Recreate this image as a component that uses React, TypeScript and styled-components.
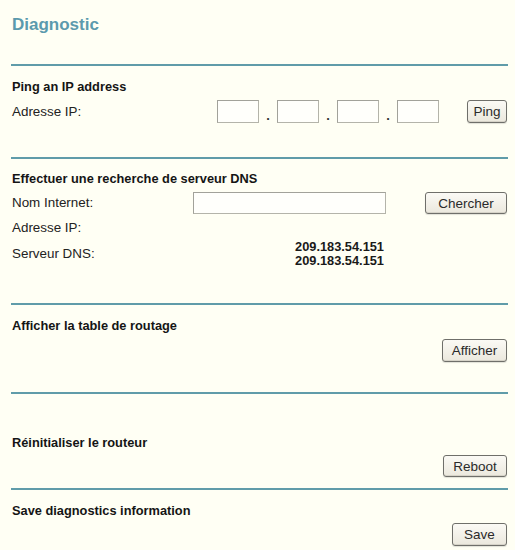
import styled, { createGlobalStyle } from "styled-components";

const GlobalStyle = createGlobalStyle`
  html, body {
    margin: 0;
    padding: 0;
    background: #fffff4;
  }
  body {
    font-family: "Liberation Sans", Arial, sans-serif;
    color: #1c1c1c;
  }
`;

export default function App() {
  return (
    <>
      <GlobalStyle />
      <div.page>
        <div.title>Diagnostic</div.title>
        <div.divider $mt={29} />

        <div.heading $mt={13}>Ping an IP address</div.heading>
        <div.pingRow>
          <div.label>Adresse IP:</div.label>
          <div.ipGroup>
            {[0, 1, 2, 3].map((i) => (
              <div.ipCell key={i}>
                <Field $w={42} $h={23} />
                {i < 3 && <div.dot>.</div.dot>}
              </div.ipCell>
            ))}
          </div.ipGroup>
          <Button $w={40} $h={23}>
            Ping
          </Button>
        </div.pingRow>
        <div.divider $mt={34} />

        <div.heading $mt={12}>Effectuer une recherche de serveur DNS</div.heading>
        <div.dnsRow $mt={5} $h={22}>
          <div.label>Nom Internet:</div.label>
          <Field $w={193} $h={22} />
          <Button $w={82} $h={22}>
            Chercher
          </Button>
        </div.dnsRow>
        <div.dnsRow $mt={4} $h={20}>
          <div.label>Adresse IP:</div.label>
        </div.dnsRow>
        <div.dnsRow $mt={2} $h={27}>
          <div.label>Serveur DNS:</div.label>
          <div.values>
            <span>209.183.54.151</span>
            <span>209.183.54.151</span>
          </div.values>
        </div.dnsRow>
        <div.divider $mt={36} />

        <div.heading $mt={13}>Afficher la table de routage</div.heading>
        <div.actionRow $mt={5}>
          <Button $w={65} $h={23}>
            Afficher
          </Button>
        </div.actionRow>
        <div.divider $mt={30} />

        <div.heading $mt={41}>Réinitialiser le routeur</div.heading>
        <div.actionRow $mt={4}>
          <Button $w={64} $h={22}>
            Reboot
          </Button>
        </div.actionRow>
        <div.divider $mt={11} />

        <div.heading $mt={13}>Save diagnostics information</div.heading>
        <div.actionRow $mt={4}>
          <Button $w={55} $h={23}>
            Save
          </Button>
        </div.actionRow>
      </div.page>
    </>
  );
}

const Field = styled.input.attrs({ type: "text" })<{ $w: number; $h: number }>`
  box-sizing: border-box;
  width: ${(p) => p.$w}px;
  height: ${(p) => p.$h}px;
  margin: 0;
  padding: 0 3px;
  border: 1px solid #b4b4aa;
  border-top-color: #a2a29a;
  border-left-color: #a2a29a;
  background: #fffffb;
  font: 13px "Liberation Sans", Arial, sans-serif;
  outline: none;
`;

const Button = styled.button<{ $w: number; $h: number }>`
  box-sizing: border-box;
  width: ${(p) => p.$w}px;
  height: ${(p) => p.$h}px;
  margin: 0;
  padding: 0;
  border: 1px solid #6f6f6a;
  border-radius: 3px;
  background: linear-gradient(#fbfaf5, #ebe8dd);
  box-shadow: inset 0 -1px 0 #d6d3c8, 0 1px 1px rgba(0, 0, 0, 0.12);
  font: 13.5px "Liberation Sans", Arial, sans-serif;
  color: #2a2a2a;
  cursor: pointer;
`;

const div = {
  page: styled.div`
    box-sizing: border-box;
    padding: 0 7px 8px 11px;
    width: 515px;
  `,
  title: styled.div`
    margin-top: 15px;
    padding-left: 1px;
    font-size: 17px;
    font-weight: bold;
    line-height: 20px;
    color: #5b9aad;
  `,
  divider: styled.div<{ $mt: number }>`
    margin-top: ${(p) => p.$mt}px;
    height: 2px;
    background: #609ca9;
  `,
  heading: styled.div<{ $mt: number }>`
    margin-top: ${(p) => p.$mt}px;
    padding-left: 1px;
    font-size: 12.8px;
    font-weight: bold;
    line-height: 16px;
    color: #151515;
  `,
  label: styled.div`
    font-size: 13.4px;
    line-height: 16px;
    color: #222;
    white-space: nowrap;
  `,
  pingRow: styled.div`
    display: grid;
    grid-template-columns: 205px 222px 40px;
    align-items: center;
    margin-top: 5px;
    padding-left: 1px;
    height: 23px;

    & > button {
      margin-left: 28px;
    }
  `,
  ipGroup: styled.div`
    display: flex;
  `,
  ipCell: styled.div`
    display: flex;
    align-items: flex-end;
  `,
  dot: styled.div`
    width: 18px;
    text-align: center;
    font-size: 13px;
    font-weight: bold;
    line-height: 14px;
    color: #333;
  `,
  dnsRow: styled.div<{ $mt: number; $h: number }>`
    display: grid;
    grid-template-columns: 181px 193px 121px;
    align-items: center;
    margin-top: ${(p) => p.$mt}px;
    height: ${(p) => p.$h}px;
    padding-left: 1px;

    & > button {
      margin-left: 39px;
    }
  `,
  values: styled.div`
    display: flex;
    flex-direction: column;
    align-items: flex-end;
    padding-right: 2px;
    font-size: 12.8px;
    font-weight: bold;
    line-height: 13.5px;
    color: #1a1a1a;
  `,
  actionRow: styled.div<{ $mt: number }>`
    display: flex;
    justify-content: flex-end;
    margin-top: ${(p) => p.$mt}px;
    padding-right: 1px;
  `,
};
